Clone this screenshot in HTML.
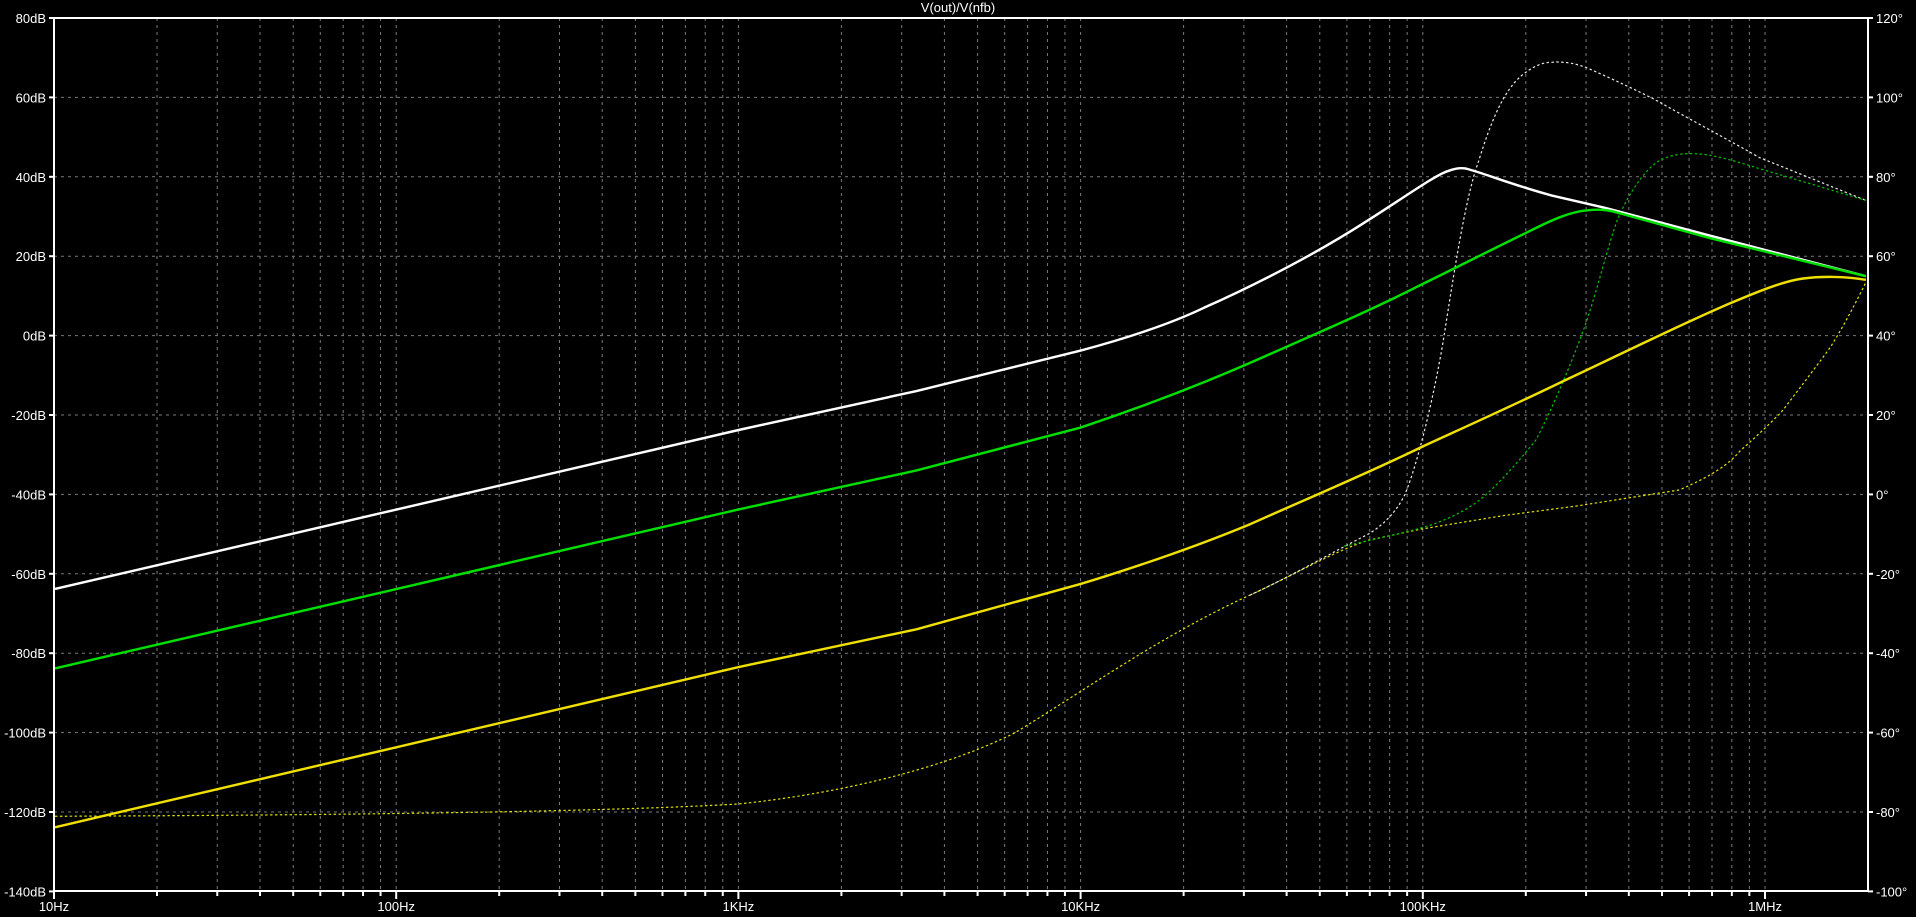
<!DOCTYPE html>
<html><head><meta charset="utf-8"><style>
html,body{margin:0;padding:0;background:#000;overflow:hidden}
svg{display:block}
text{font-family:"Liberation Sans",sans-serif;fill:#fff;font-size:13px}
</style></head><body>
<svg id="s" width="1916" height="917" viewBox="0 0 1916 917" xmlns="http://www.w3.org/2000/svg">
<rect width="1916" height="917" fill="#000"/>
<g id="grid" stroke="#7a7a7a" stroke-width="1" stroke-dasharray="3,4"></g>
<g id="lab"></g>
<text x="958" y="12" text-anchor="middle" font-size="11">V(out)/V(nfb)</text>
<g transform="scale(1.22194)" fill="none" stroke-linejoin="round">
<path d="M45,668 C300,667 500,664 604,658 C700,648 780,625 830,600 C880,570 950,520 1023,487 C1060,470 1090,452 1120,442 L1163,433 L1230,422 L1291,414 L1374,401 C1400,390 1415,380 1424,369 C1440,355 1450,345 1458,337 C1475,315 1490,295 1498,284 C1510,265 1520,245 1527,231" stroke="#e0e000" stroke-width="1" stroke-dasharray="2,2"/>
<path d="M1023,487 C1060,470 1090,452 1120,437 C1135,428 1145,415 1150,404 C1160,380 1175,320 1183,267 C1192,210 1200,160 1210,132 C1220,100 1230,75 1245,62 C1255,54 1262,51 1270,51 C1280,50 1290,52 1300,56 C1320,65 1340,74 1357,83 C1380,96 1410,112 1440,129 L1527,164" stroke="#e8e8e8" stroke-width="1" stroke-dasharray="2,2"/>
<path d="M1100,447 C1130,440 1150,436 1170,430 C1190,423 1205,415 1217,404 C1232,390 1245,375 1257,360 C1270,335 1285,300 1297,267 C1308,235 1316,200 1324,179 C1332,160 1345,140 1357,132 C1368,126 1380,125 1390,126 C1405,127 1420,132 1440,138 L1527,164" stroke="#00c000" stroke-width="1" stroke-dasharray="2,2"/>
<path d="M45,482 L604,352 L750,320 L884,287 C925,276 960,264 985,252 C1030,232 1080,206 1120,180 C1150,161 1175,143 1185,140 C1190,138 1195,137 1200,138 C1215,142 1240,152 1270,160 L1313,170 L1400,193 L1527,226" stroke="#fff" stroke-width="2"/>
<path d="M45,547 L604,417 L750,385 L884,350 C920,338 970,320 1023,297 C1070,276 1120,255 1163,233 C1190,220 1215,207 1250,190 C1270,180 1285,173 1300,172 C1310,171 1315,172 1320,173 L1400,195 L1527,226" stroke="#00e000" stroke-width="2"/>
<path d="M45,677 L604,546 L750,515 L884,478 C920,467 970,451 1023,429 C1070,408 1120,387 1163,366 C1200,349 1240,331 1277,313 C1320,293 1370,268 1414,249 C1440,238 1460,230 1475,228 C1490,226 1510,226 1527,229" stroke="#f0e000" stroke-width="2"/>
</g>
<rect x="54" y="18" width="1814" height="873" fill="none" stroke="#fff" stroke-width="2"/>
</svg>
<script>
var NS="http://www.w3.org/2000/svg",g=document.getElementById('grid'),lab=document.getElementById('lab');
function el(p,t,a,txt){var e=document.createElementNS(NS,t);for(var k in a)e.setAttribute(k,a[k]);if(txt)e.textContent=txt;p.appendChild(e);return e;}
var L=54,R=1868,T=18,B=891,D=342.2,S=79.4;
for(var i=1;i<11;i++){var y=T+i*S;el(g,'line',{x1:L,x2:R,y1:y,y2:y});}
for(var i=0;i<=11;i++){var y=T+i*S;
 el(lab,'line',{x1:L-5,x2:L,y1:y,y2:y,stroke:'#fff','stroke-width':2});
 el(lab,'line',{x1:R,x2:R+5,y1:y,y2:y,stroke:'#fff','stroke-width':2});
 el(lab,'text',{x:L-8,y:y+5,'text-anchor':'end'},(80-20*i)+'dB');
 el(lab,'text',{x:R+8,y:y+5},(120-20*i)+'°');}
var names=['10Hz','100Hz','1KHz','10KHz','100KHz','1MHz'];
for(var d=0;d<6;d++){for(var m=1;m<10;m++){var x=L+D*Math.log10(m)+D*d;
 if(x>=R-1)break;
 if(!(d==0&&m==1))el(g,'line',{x1:x,x2:x,y1:T,y2:B});
 el(lab,'line',{x1:x,x2:x,y1:B,y2:B+(m==1?8:5),stroke:'#fff','stroke-width':2});
 if(m==1)el(lab,'text',{x:x,y:B+20,'text-anchor':'middle'},names[d]);}}
</script>
</body></html>
